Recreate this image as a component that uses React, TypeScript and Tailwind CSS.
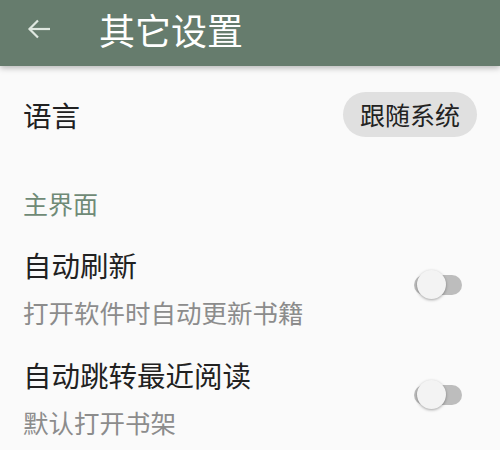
import React from "react";

function Switch() {
  return (
    <div className="relative w-[48px] h-[30px] mr-[15px] flex items-center">
      <div className="w-[48px] h-[20px] rounded-full bg-[#bdbdbd]" />
      <div className="absolute left-[3px] top-[0px] w-[29px] h-[29px] rounded-full bg-[#f3f3f3] shadow-[0_1px_3px_rgba(0,0,0,0.35)]" />
    </div>
  );
}

function Item({ title, sub }: { title: string; sub: string }) {
  return (
    <div className="flex items-center justify-between">
      <div className="flex flex-col">
        <span className="text-[28.5px] leading-[34px] text-[#212121]">{title}</span>
        <span className="mt-[15px] text-[25.5px] leading-[30px] text-[#8c8c8c]">{sub}</span>
      </div>
      <div className="mb-[6px]">
        <Switch />
      </div>
    </div>
  );
}

export default function App() {
  return (
    <div
      className="w-[500px] h-[450px] bg-[#fafafa] overflow-hidden"
      style={{ fontFamily: '"Noto Sans CJK SC", "Noto Sans", sans-serif' }}
    >
      <header className="relative z-10 h-[66px] bg-[#667c6d] flex items-center pb-[8px] shadow-[0_2px_6px_rgba(0,0,0,0.28)]">
        <svg className="ml-[27px]" width="24" height="20" viewBox="0 0 24 20" fill="none">
          <path d="M2 10H23" stroke="#dfe7e0" strokeWidth="2.2" />
          <path d="M11 1.5L2.5 10L11 18.5" stroke="#dfe7e0" strokeWidth="2.2" />
        </svg>
        <h1 className="ml-[48px] text-[36px] leading-none text-white">其它设置</h1>
      </header>
      <div className="px-[23px]">
        <div className="mt-[26px] flex items-center justify-between">
          <span className="text-[28.5px] leading-[34px] text-[#212121]">语言</span>
          <span className="h-[45px] w-[134px] rounded-full bg-[#e0e0e0] flex items-center justify-center text-[25px] leading-none text-[#222]">
            跟随系统
          </span>
        </div>
        <div className="mt-[51px] text-[25px] leading-[30px] text-[#6f8a76]">主界面</div>
        <div className="mt-[30px]">
          <Item title="自动刷新" sub="打开软件时自动更新书籍" />
        </div>
        <div className="mt-[31px]">
          <Item title="自动跳转最近阅读" sub="默认打开书架" />
        </div>
      </div>
    </div>
  );
}
